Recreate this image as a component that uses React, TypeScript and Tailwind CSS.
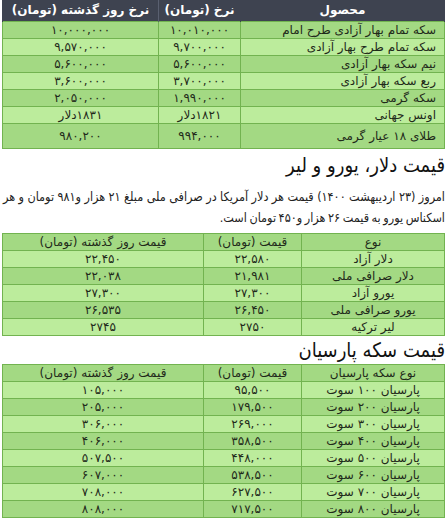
const font = { fontFamily: '"DejaVu Sans", Tahoma, sans-serif' };
const narrow = { fontFamily: '"DejaVu Sans Condensed", "DejaVu Sans", Tahoma, sans-serif' };

const goldRows = [
  ['سکه تمام بهار آزادی طرح امام', '۱۰,۰۱۰,۰۰۰', '۱۰,۰۰۰,۰۰۰'],
  ['سکه تمام طرح بهار آزادی', '۹,۷۰۰,۰۰۰', '۹,۵۷۰,۰۰۰'],
  ['نیم سکه بهار آزادی', '۵,۶۰۰,۰۰۰', '۵,۶۰۰,۰۰۰'],
  ['ربع سکه بهار آزادی', '۳,۷۰۰,۰۰۰', '۳,۶۰۰,۰۰۰'],
  ['سکه گرمی', '۱,۹۹۰,۰۰۰', '۲,۰۵۰,۰۰۰'],
  ['اونس جهانی', '۱۸۲۱دلار', '۱۸۳۱دلار'],
  ['طلای ۱۸ عیار گرمی', '۹۹۴,۰۰۰', '۹۸۰,۲۰۰'],
];

const currencyRows = [
  ['دلار آزاد', '۲۲,۵۸۰', '۲۲,۴۵۰'],
  ['دلار صرافی ملی', '۲۱,۹۸۱', '۲۲,۰۳۸'],
  ['یورو آزاد', '۲۷,۳۰۰', '۲۷,۳۰۰'],
  ['یورو صرافی ملی', '۲۶,۴۵۰', '۲۶,۵۳۵'],
  ['لیر ترکیه', '۲۷۵۰', '۲۷۴۵'],
];

const parsianRows = [
  ['پارسیان ۱۰۰ سوت', '۹۵,۵۰۰', '۱۰۵,۰۰۰'],
  ['پارسیان ۲۰۰ سوت', '۱۷۹,۵۰۰', '۲۰۵,۰۰۰'],
  ['پارسیان ۳۰۰ سوت', '۲۶۹,۰۰۰', '۳۰۶,۰۰۰'],
  ['پارسیان ۴۰۰ سوت', '۳۵۸,۵۰۰', '۴۰۶,۰۰۰'],
  ['پارسیان ۵۰۰ سوت', '۴۴۸,۰۰۰', '۵۰۷,۵۰۰'],
  ['پارسیان ۶۰۰ سوت', '۵۳۸,۵۰۰', '۶۰۷,۰۰۰'],
  ['پارسیان ۷۰۰ سوت', '۶۲۷,۵۰۰', '۷۰۸,۰۰۰'],
  ['پارسیان ۸۰۰ سوت', '۷۱۷,۵۰۰', '۸۰۸,۰۰۰'],
];

function GoldTable() {
  return (
    <table className="w-[442px] table-fixed border-collapse text-[12px] text-[#1f2a1a]">
      <colgroup>
        <col className="w-[204px]" />
        <col className="w-[82px]" />
        <col className="w-[156px]" />
      </colgroup>
      <thead>
        <tr className="h-[21px] bg-[#3e4350] text-white">
          <th className="border-x border-[#3e4350] font-bold">محصول</th>
          <th className="border-x border-[#5a6070] font-bold">نرخ (تومان)</th>
          <th className="border-x border-[#3e4350] font-bold">نرخ روز گذشته (تومان)</th>
        </tr>
      </thead>
      <tbody>
        {goldRows.map((r, i) => (
          <tr
            key={i}
            className={`${i === goldRows.length - 1 ? 'h-[25px]' : 'h-[17px]'} ${
              i % 2 === 0 ? 'bg-[#a3d983]' : 'bg-[#bcec9c]'
            }`}
          >
            <td className="border border-[#72b350] pr-2 text-right leading-none">{r[0]}</td>
            <td className="border border-[#72b350] text-center leading-none">{r[1]}</td>
            <td className="border border-[#72b350] text-center leading-none">{r[2]}</td>
          </tr>
        ))}
      </tbody>
    </table>
  );
}

function GreenTable({ head, rows }: { head: string[]; rows: string[][] }) {
  return (
    <table className="w-[442px] table-fixed border-collapse text-[12px] text-[#1f2a1a]">
      <colgroup>
        <col className="w-[143px]" />
        <col className="w-[98px]" />
        <col className="w-[201px]" />
      </colgroup>
      <thead>
        <tr className="h-[17px] bg-[#a3d983]">
          {head.map((h, i) => (
            <th key={i} className="border border-[#72b350] text-center font-normal leading-none">
              {h}
            </th>
          ))}
        </tr>
      </thead>
      <tbody>
        {rows.map((r, i) => (
          <tr key={i} className={`h-[17px] ${i % 2 === 0 ? 'bg-[#bcec9c]' : 'bg-[#a3d983]'}`}>
            {r.map((c, j) => (
              <td key={j} className="border border-[#72b350] text-center leading-none">
                {c}
              </td>
            ))}
          </tr>
        ))}
      </tbody>
    </table>
  );
}

export default function App() {
  return (
    <div dir="rtl" className="w-[447px] bg-white pl-[3px] pr-[2px]" style={font}>
      <GoldTable />
      <h2 className="mt-[2px] text-[20px] leading-[28px] text-[#111]" style={narrow}>
        قیمت دلار، یورو و لیر
      </h2>
      <p className="mt-[7px] text-justify text-[12.5px] leading-[21px] text-[#222] [word-spacing:-1px]" style={narrow}>
        امروز (۲۳ اردیبهشت ۱۴۰۰) قیمت هر دلار آمریکا در صرافی ملی مبلغ ۲۱ هزار و۹۸۱ تومان و هر اسکناس یورو به قیمت ۲۶ هزار و۴۵۰ تومان است.
      </p>
      <div className="mt-[5px]">
        <GreenTable head={['نوع', 'قیمت (تومان)', 'قیمت روز گذشته (تومان)']} rows={currencyRows} />
      </div>
      <h2 className="mt-[1px] text-[20px] leading-[27px] text-[#111]" style={narrow}>
        قیمت سکه پارسیان
      </h2>
      <GreenTable head={['نوع سکه پارسیان', 'قیمت (تومان)', 'قیمت روز گذشته (تومان)']} rows={parsianRows} />
    </div>
  );
}
